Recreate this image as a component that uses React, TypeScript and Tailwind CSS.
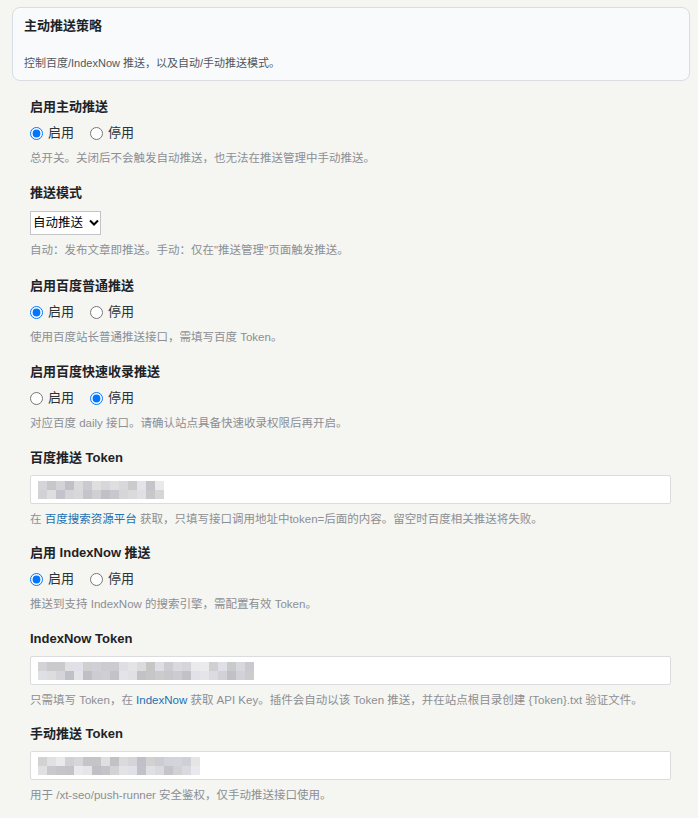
import React from "react";

const font = { fontFamily: '"Liberation Sans", "Noto Sans CJK SC", sans-serif' };

function Radio({ name, checked, label }: { name: string; checked: boolean; label: string }) {
  return (
    <label className="flex items-center gap-[5px] text-[13px] leading-5 text-[#2c3338]">
      <input type="radio" name={name} defaultChecked={checked} className="m-0 h-[13px] w-[13px]" />
      <span>{label}</span>
    </label>
  );
}

function RadioField({ title, name, on, help }: { title: string; name: string; on: boolean; help: React.ReactNode }) {
  return (
    <div className="mb-[16px]">
      <div className="text-[13px] leading-5 font-bold text-[#1d2327]">{title}</div>
      <div className="mt-[6px] flex items-center gap-[16px]">
        <Radio name={name} checked={on} label="启用" />
        <Radio name={name} checked={!on} label="停用" />
      </div>
      <p className="mt-[6px] text-[11.5px] leading-[18px] text-[#8c8f94]">{help}</p>
    </div>
  );
}

// blurred placeholder for a hidden token value
function Masked({ cols, seed }: { cols: number; seed: number }) {
  let s = seed;
  const next = () => {
    s = (s * 9301 + 49297) % 233280;
    return s / 233280;
  };
  const rows = [0, 1].map(() =>
    Array.from({ length: cols }, () => {
      const v = Math.round(196 + next() * 42);
      const t = Math.round(next() * 8);
      return `rgb(${v - t},${v - t},${v})`;
    })
  );
  return (
    <div className="flex flex-col blur-[0.6px]">
      {rows.map((r, i) => (
        <div key={i} className="flex">
          {r.map((c, j) => (
            <span key={j} className="block h-[9px] w-[9px]" style={{ backgroundColor: c }} />
          ))}
        </div>
      ))}
    </div>
  );
}

function TokenField({ title, cols, seed, help }: { title: string; cols: number; seed: number; help: React.ReactNode }) {
  return (
    <div className="mb-[15px]">
      <div className="text-[13px] leading-5 font-bold text-[#1d2327]">{title}</div>
      <div className="mt-[7px] flex h-[29px] w-[641px] items-center rounded-[2px] border border-[#dcdcde] bg-white px-[7px]">
        <Masked cols={cols} seed={seed} />
      </div>
      <p className="mt-[6px] text-[11.5px] leading-[18px] text-[#8c8f94]">{help}</p>
    </div>
  );
}

export default function App() {
  return (
    <div className="min-h-[818px] bg-[#f5f5f1] pt-[7px] pr-[8px] pl-[12px]" style={font}>
      <div className="rounded-[8px] border border-[#d9dde3] bg-[#f9fafb] px-[11px] pt-[10px] pb-[9px]">
        <h2 className="text-[13px] leading-4 font-bold text-[#1d2327]">主动推送策略</h2>
        <p className="mt-[21px] text-[11px] leading-4 text-[#50575e]">控制百度/IndexNow 推送，以及自动/手动推送模式。</p>
      </div>

      <div className="flex flex-col pt-[16px] pl-[18px]">
        <RadioField
          title="启用主动推送"
          name="enable"
          on
          help="总开关。关闭后不会触发自动推送，也无法在推送管理中手动推送。"
        />

        <div className="mb-[17px]">
          <div className="text-[13px] leading-5 font-bold text-[#1d2327]">推送模式</div>
          <div className="relative mt-[7px] w-[71px]">
            <select
              defaultValue="auto"
              className="h-[24px] w-[71px] appearance-none border border-[#c3c4c7] bg-white pl-[2px] text-[12.5px] leading-[22px] text-black"
            >
              <option value="auto">自动推送</option>
              <option value="manual">手动推送</option>
            </select>
            <svg
              className="pointer-events-none absolute top-[9px] right-[2px] h-[7px] w-[10px]"
              viewBox="0 0 10 7"
              fill="none"
              stroke="#000"
              strokeWidth={2}
            >
              <path d="M1 1.5l4 4 4-4" />
            </svg>
          </div>
          <p className="mt-[6px] text-[11.5px] leading-[18px] text-[#8c8f94]">
            自动：发布文章即推送。手动：仅在"推送管理"页面触发推送。
          </p>
        </div>

        <RadioField title="启用百度普通推送" name="baidu" on help="使用百度站长普通推送接口，需填写百度 Token。" />
        <RadioField
          title="启用百度快速收录推送"
          name="daily"
          on={false}
          help="对应百度 daily 接口。请确认站点具备快速收录权限后再开启。"
        />

        <TokenField
          title="百度推送 Token"
          cols={14}
          seed={7}
          help={
            <>
              在 <span className="text-[#2271b1]">百度搜索资源平台</span> 获取，只填写接口调用地址中token=后面的内容。留空时百度相关推送将失败。
            </>
          }
        />

        <RadioField
          title="启用 IndexNow 推送"
          name="indexnow"
          on
          help="推送到支持 IndexNow 的搜索引擎，需配置有效 Token。"
        />

        <TokenField
          title="IndexNow Token"
          cols={24}
          seed={31}
          help={
            <>
              只需填写 Token，在 <span className="text-[#2271b1]">IndexNow</span> 获取 API Key。插件会自动以该 Token 推送，并在站点根目录创建 {"{Token}"}.txt 验证文件。
            </>
          }
        />

        <TokenField
          title="手动推送 Token"
          cols={18}
          seed={53}
          help="用于 /xt-seo/push-runner 安全鉴权，仅手动推送接口使用。"
        />
      </div>
    </div>
  );
}
